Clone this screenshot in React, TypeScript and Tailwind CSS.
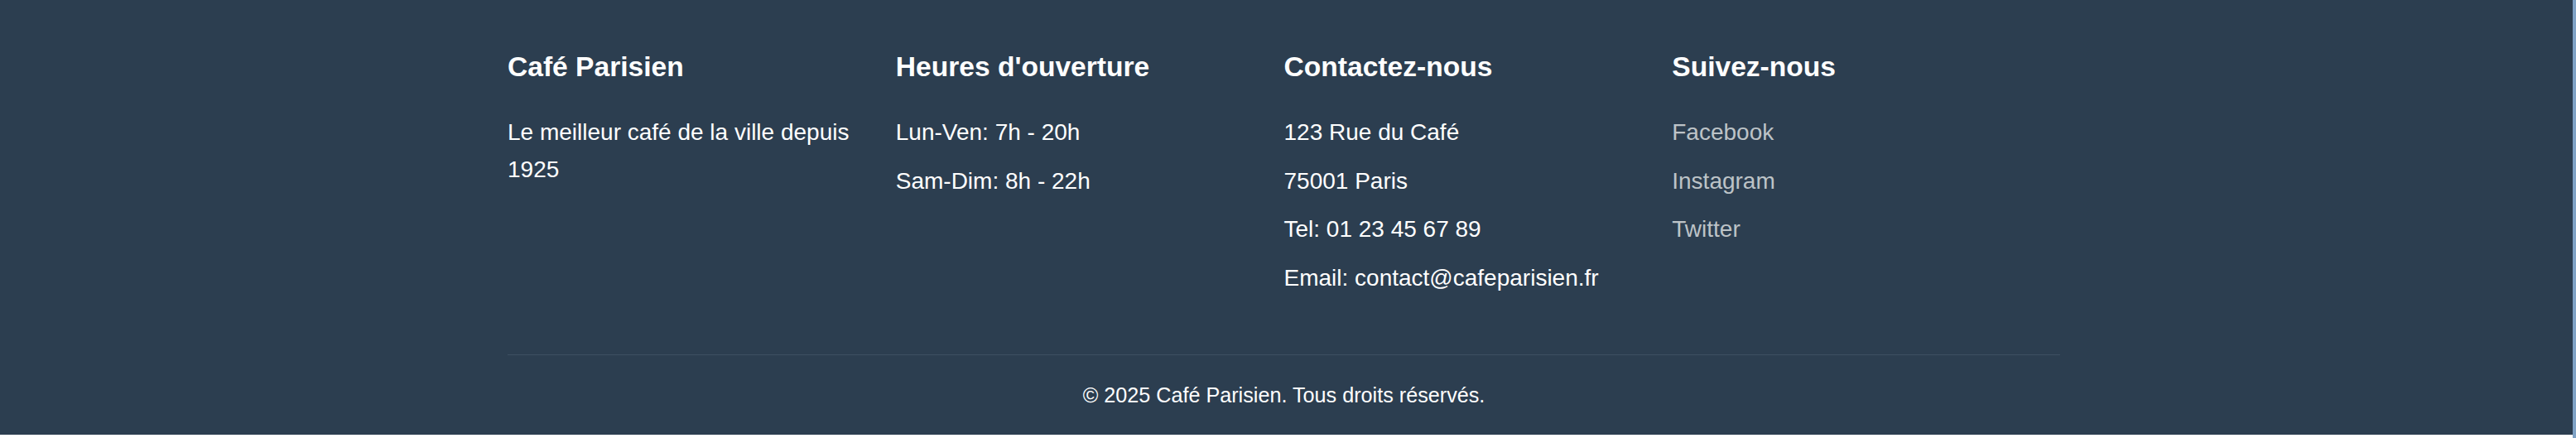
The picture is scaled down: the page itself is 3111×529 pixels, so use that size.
export default function App() {
  const contact = ['123 Rue du Café', '75001 Paris', 'Tel: 01 23 45 67 89', 'Email: contact@cafeparisien.fr']
  const hours = ['Lun-Ven: 7h - 20h', 'Sam-Dim: 8h - 22h']
  const social = ['Facebook', 'Instagram', 'Twitter']

  return (
    <div className="flex h-[529px] w-full bg-white" style={{ fontFamily: '"Liberation Sans", Arial, sans-serif' }}>
      <div className="flex-1 flex flex-col">
        <footer className="bg-[#2c3e50] text-white pt-[54px] pb-[28px] pr-[6px] text-[28px] leading-[1.6]">
          <div className="mx-auto w-[1875px]">
            <div className="grid grid-cols-4 mb-[55px]">
              <div>
                <h3 className="text-[33.6px] font-bold leading-[1.6] mb-[30px]">Café Parisien</h3>
                <p>Le meilleur café de la ville depuis 1925</p>
              </div>
              <div>
                <h3 className="text-[33.6px] font-bold leading-[1.6] mb-[30px]">Heures d'ouverture</h3>
                {hours.map((h) => (
                  <p key={h} className="mb-[14px]">{h}</p>
                ))}
              </div>
              <div>
                <h3 className="text-[33.6px] font-bold leading-[1.6] mb-[30px]">Contactez-nous</h3>
                {contact.map((c) => (
                  <p key={c} className="mb-[14px]">{c}</p>
                ))}
              </div>
              <div>
                <h3 className="text-[33.6px] font-bold leading-[1.6] mb-[30px]">Suivez-nous</h3>
                <ul>
                  {social.map((s) => (
                    <li key={s} className="mb-[14px]">
                      <a href="#" className="text-[#bdc3c7]">{s}</a>
                    </li>
                  ))}
                </ul>
              </div>
            </div>
            <div className="border-t border-[#3d4f62] pt-[28px] text-center text-[25.2px]">
              © 2025 Café Parisien. Tous droits réservés.
            </div>
          </div>
        </footer>
      </div>
      <div className="w-[4px] bg-[#7fa2c5]" />
    </div>
  )
}
